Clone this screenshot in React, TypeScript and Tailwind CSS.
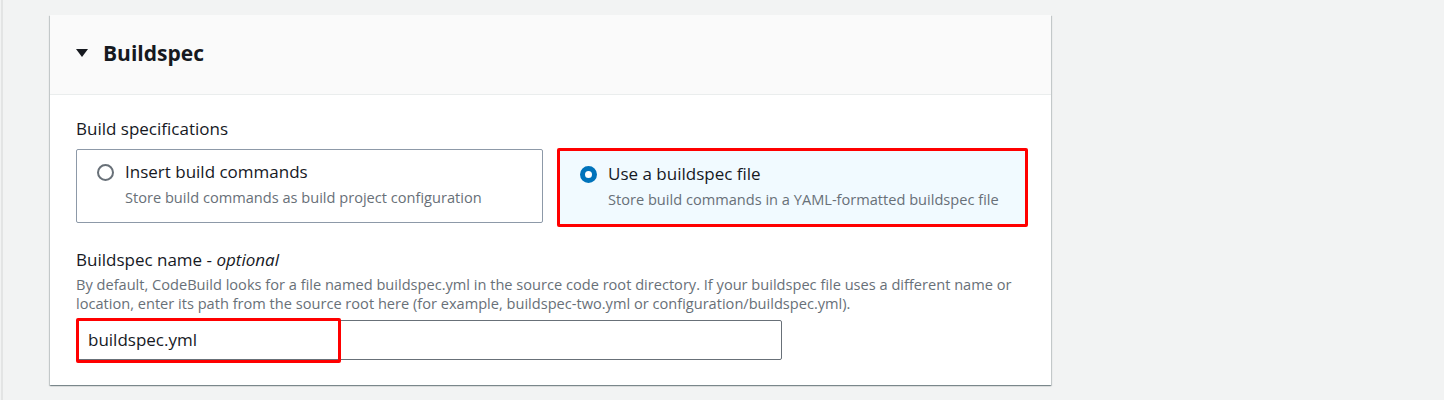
import React from "react";

export default function App() {
  return (
    <div className="w-[1444px] h-[400px] bg-[#f2f3f3] relative overflow-hidden" style={{ fontFamily: '"Open Sans", "Noto Sans", Arial, sans-serif' }}>
      <div className="absolute left-[1px] top-0 h-[400px] w-[2px] bg-[#e3e4e4]" />
      <div className="pt-[15px] pl-[50px]">
        <div className="w-[1001px] h-[370px] bg-white shadow-[0_1px_1px_0_rgba(0,28,36,0.3),1px_1px_1px_0_rgba(0,28,36,0.15),-1px_1px_1px_0_rgba(0,28,36,0.15)]">
          <div className="h-[80px] bg-[#fafafa] border-b border-[#eaeded] flex items-center pl-[26px] pb-[3px]">
            <svg width="12" height="9" viewBox="0 0 12 9" className="mr-[15px]">
              <polygon points="0,0 12,0 6,8" fill="#16191f" />
            </svg>
            <span className="text-[21px] font-bold text-[#16191f] leading-none">Buildspec</span>
          </div>
          <div className="px-[26px] pt-[23px]">
            <div className="text-[17px] text-[#16191f] leading-[22px]">Build specifications</div>
            <div className="flex mt-[9px] items-start">
              <div className="shrink-0 w-[467px] h-[74px] border border-[#8d99a8] rounded-[2px] flex pl-[20px] pt-[11px]">
                <div className="w-[17px] h-[17px] rounded-full border-2 border-[#687078] mt-[3px] mr-[11px]" />
                <div>
                  <div className="text-[17px] text-[#16191f] leading-[22px]">Insert build commands</div>
                  <div className="text-[14.6px] text-[#687078] leading-[20px] mt-[4px]">Store build commands as build project configuration</div>
                </div>
              </div>
              <div className="shrink-0 ml-[14px] -mt-[1px] w-[471px] h-[79px] border-[3px] border-[#ff0000] rounded-[2px] bg-[#f1faff] flex pl-[20px] pt-[11px]">
                <div className="w-[17px] h-[17px] rounded-full border-[5px] border-[#0073bb] bg-white mt-[4px] mr-[11px]" />
                <div>
                  <div className="text-[17px] text-[#16191f] leading-[22px] mt-[1px]">Use a buildspec file</div>
                  <div className="text-[14.6px] text-[#687078] leading-[20px] mt-[4px]">Store build commands in a YAML-formatted buildspec file</div>
                </div>
              </div>
            </div>
            <div className="mt-[22px] text-[17px] text-[#16191f] leading-[22px]">
              Buildspec name - <i>optional</i>
            </div>
            <div className="text-[14.6px] text-[#687078] leading-[19px] mt-[4px] w-[949px]">
              By default, CodeBuild looks for a file named buildspec.yml in the source code root directory. If your buildspec file uses a different name or location, enter its path from the source root here (for example, buildspec-two.yml or configuration/buildspec.yml).
            </div>
            <div className="relative mt-[7px] w-[706px] h-[40px] border border-[#687078] rounded-[2px] flex items-center">
              <span className="pl-[11px] text-[17px] text-[#16191f]">buildspec.yml</span>
              <div className="absolute -left-px -top-[3px] w-[265px] h-[45px] border-[3px] border-[#ff0000] rounded-[2px]" />
            </div>
          </div>
        </div>
      </div>
    </div>
  );
}
